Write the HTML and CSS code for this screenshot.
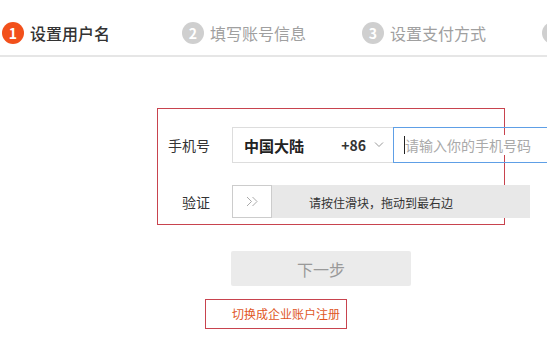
FILE: index.html
```html
<!DOCTYPE html>
<html lang="zh-CN">
<head>
    <meta charset="UTF-8">
    <meta name="viewport" content="width=device-width, initial-scale=1.0">
    <title>注册</title>
    <link rel="stylesheet" href="styles.css">
</head>
<body>
    <div class="steps">
        <div class="step active"><span class="num">1</span><span class="name">设置用户名</span></div>
        <div class="step"><span class="num">2</span><span class="name">填写账号信息</span></div>
        <div class="step"><span class="num">3</span><span class="name">设置支付方式</span></div>
        <div class="step"><span class="num"></span></div>
    </div>

    <form class="panel" id="registerForm">
        <div class="row">
            <label>手机号</label>
            <div class="country">
                <span class="country-name">中国大陆</span>
                <span class="code">+86</span>
                <svg class="chevron" width="10" height="6" viewBox="0 0 10 6"><path d="M1 0.5 L5 4.5 L9 0.5" fill="none" stroke="#999" stroke-width="1"/></svg>
            </div>
            <div class="phone">
                <span class="caret"></span>
                <input type="text" placeholder="请输入你的手机号码">
            </div>
        </div>
        <div class="row verify">
            <label>验证</label>
            <div class="slider">
                <div class="handle">
                    <svg width="13" height="11" viewBox="0 0 13 11"><path d="M1 1 L5.5 5.5 L1 10 M6.5 1 L11 5.5 L6.5 10" fill="none" stroke="#aaa" stroke-width="1"/></svg>
                </div>
                <span class="slider-text">请按住滑块，拖动到最右边</span>
            </div>
        </div>
    </form>

    <div class="actions">
        <button type="button" class="next">下一步</button>
    </div>
    <a class="switch" href="#">切换成企业账户注册</a>
</body>
</html>
```

FILE: styles.css
```css
body {
    margin: 0;
    background: #fff;
    font-family: "Noto Sans CJK SC", "Noto Sans", sans-serif;
    color: #333;
    overflow: hidden;
}

.steps {
    display: flex;
    height: 55px;
    border-bottom: 2px solid #e6e6e6;
    overflow: hidden;
    white-space: nowrap;
}

.step {
    flex-shrink: 0;
    width: 148px;
    margin-right: 30px;
    padding: 11px 0 0 2px;
    height: 44px;
    display: flex;
    align-items: center;
    color: #a0a0a0;
    border-bottom: 2px solid transparent;
}

.step.active {
    color: #333;
    border-bottom-color: #dc5a26;
}

.step .num {
    flex-shrink: 0;
    width: 22px;
    height: 22px;
    border-radius: 50%;
    background: #cfcfcf;
    color: #fff;
    font-size: 14px;
    font-weight: bold;
    line-height: 22px;
    text-align: center;
    margin-right: 6px;
}

.step.active .num {
    background: #f2501b;
}

.step .name {
    font-size: 16px;
    line-height: 22px;
}

.step.active .name {
    font-weight: 500;
}

.panel {
    width: 346px;
    margin: 51px 0 0 157px;
    padding: 18px 0 6px;
    border: 1px solid #c8434e;
}

.row {
    display: flex;
    align-items: center;
}

.row label {
    width: 52px;
    margin-right: 22px;
    text-align: right;
    font-size: 14px;
    color: #333;
    flex-shrink: 0;
}

.country {
    box-sizing: border-box;
    flex-shrink: 0;
    width: 161px;
    height: 36px;
    display: flex;
    align-items: center;
    padding: 0 9px 0 11px;
    border: 1px solid #ddd;
    border-right: none;
    font-weight: bold;
}

.country-name {
    font-size: 15px;
    color: #222;
}

.code {
    margin-left: auto;
    margin-right: 8px;
    font-size: 14px;
    color: #333;
}

.phone {
    box-sizing: border-box;
    flex-shrink: 0;
    width: 200px;
    height: 36px;
    display: flex;
    align-items: center;
    padding-left: 10px;
    border: 1px solid #5e9fe6;
}

.caret {
    width: 1px;
    height: 18px;
    background: #222;
}

.phone input {
    border: none;
    outline: none;
    padding: 0;
    width: 170px;
    font-family: inherit;
    font-size: 14px;
    color: #333;
}

.phone input::placeholder {
    color: #a9a9a9;
}

.verify {
    margin-top: 22px;
}

.slider {
    position: relative;
    flex-shrink: 0;
    width: 298px;
    height: 33px;
    background: #e8e8e8;
    text-align: center;
    line-height: 33px;
}

.slider-text {
    font-size: 12px;
    color: #333;
}

.handle {
    position: absolute;
    left: 0;
    top: 0;
    box-sizing: border-box;
    width: 40px;
    height: 33px;
    background: #fff;
    border: 1px solid #ccc;
    display: flex;
    align-items: center;
    justify-content: center;
}

.actions {
    margin: 26px 0 0 231px;
}

.next {
    display: block;
    width: 180px;
    height: 35px;
    border: none;
    border-radius: 2px;
    background: #ebebeb;
    color: #999;
    font-family: inherit;
    font-size: 16px;
    cursor: not-allowed;
}

.switch {
    display: block;
    box-sizing: border-box;
    width: 142px;
    height: 30px;
    margin: 13px 0 0 205px;
    padding-left: 26px;
    border: 1px solid #c8434e;
    line-height: 28px;
    font-size: 12px;
    color: #e0571f;
    text-decoration: none;
    white-space: nowrap;
}
```
